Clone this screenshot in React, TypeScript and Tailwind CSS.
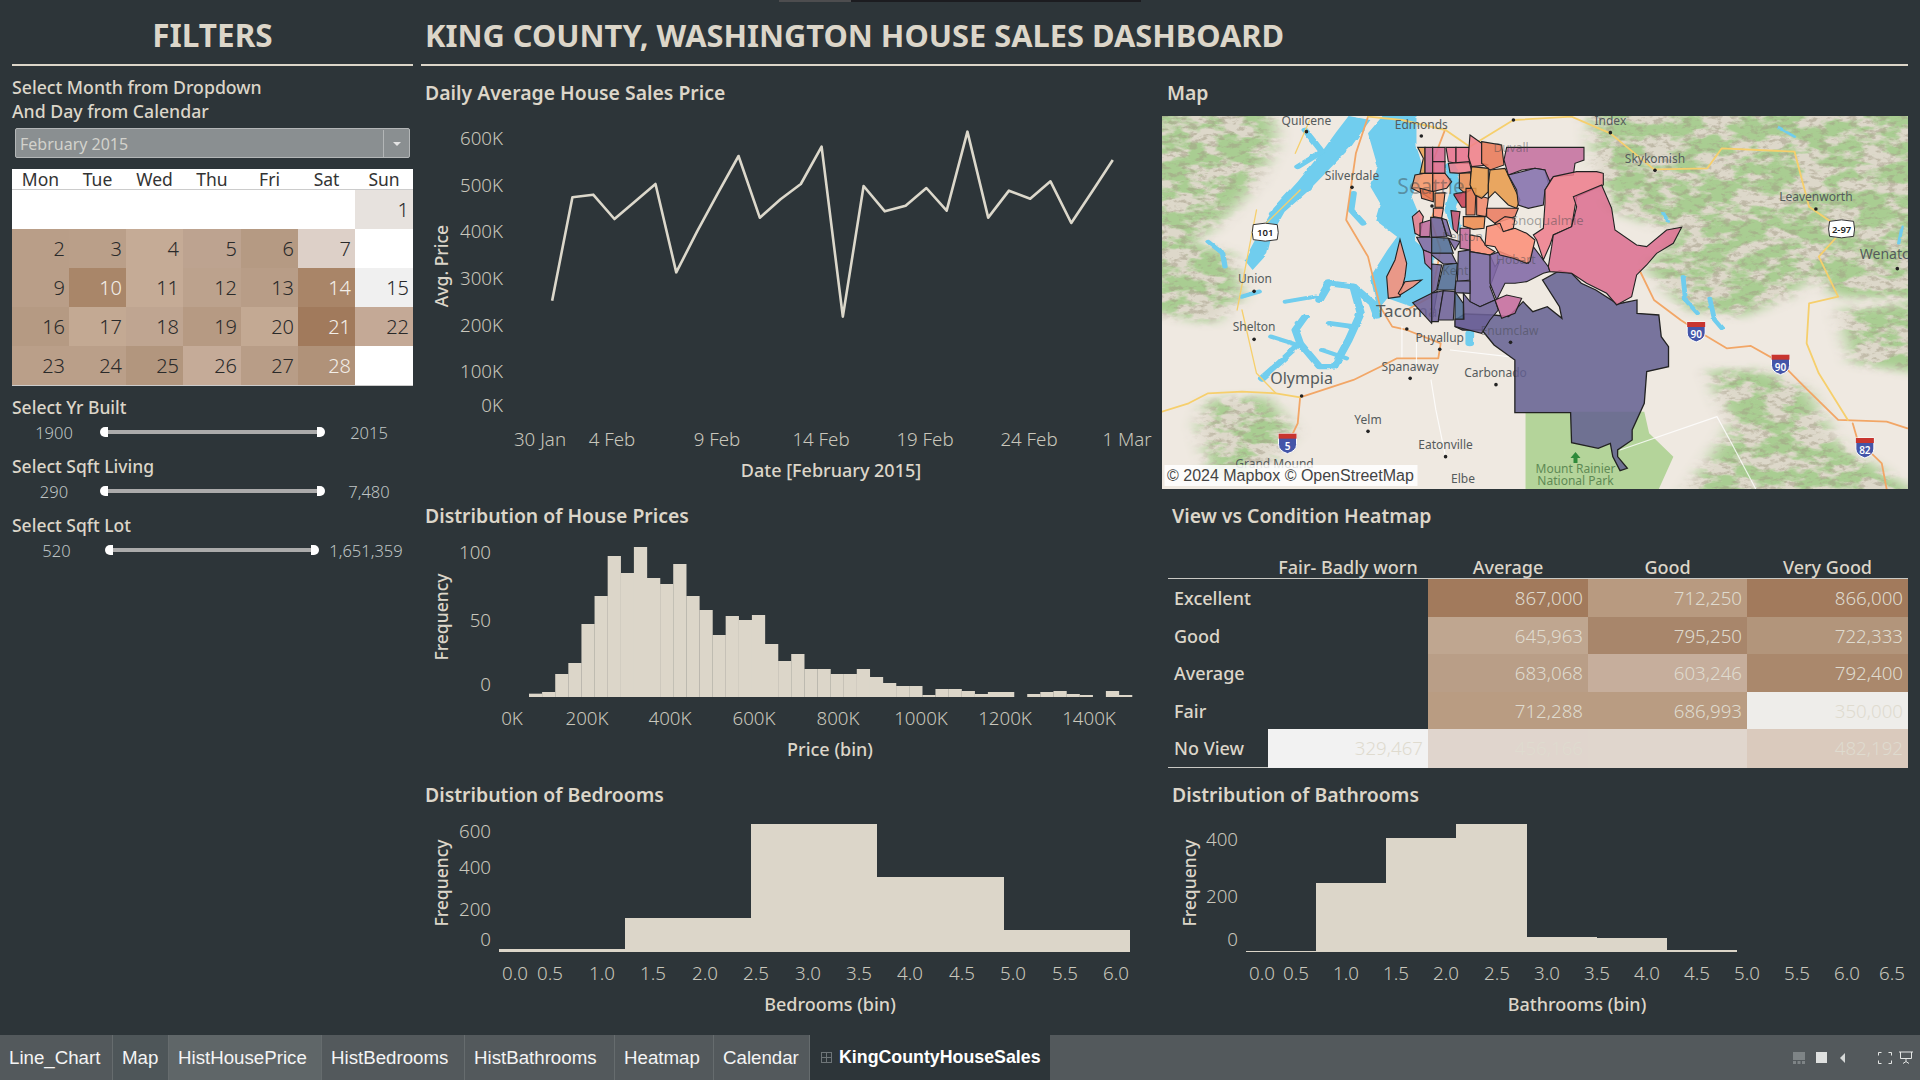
const lineText = "fill-[#c9c7bc] text-[18.7px] font-light";
const axisTitle = "fill-[#dcd6c9] text-[18px] font-medium";
const rotTitle = "fill-[#dcd6c9] text-[17.5px] font-medium";
const bar = "#dcd6c9";

const linePts = [
  [280, 572], [323, 262], [367, 254], [412, 327], [455, 275], [499, 222], [543, 487], [587, 365], [631, 250], [675, 138],
  [720, 323], [764, 268], [807, 222], [851, 110], [896, 620], [940, 228], [985, 304], [1029, 287], [1073, 234], [1116, 302],
  [1160, 65], [1204, 323], [1248, 242], [1293, 266], [1336, 214], [1380, 339], [1424, 245], [1468, 150],
];

const priceTops = [
  581, 576, 522, 489, 372, 288, 168, 219, 141, 234, 252, 192, 288, 330, 405, 348, 360, 345, 432, 483, 462, 507, 507,
  522, 522, 507, 531, 549, 558, 558, 585, 567, 567, 573, 582, 576, 576, 591, 582, 576, 573, 582, 585, 591, 573, 585,
];

const calendar: [string, string, boolean][][] = [
  [["", "#fff", false], ["", "#fff", false], ["", "#fff", false], ["", "#fff", false], ["", "#fff", false], ["", "#fff", false], ["1", "#e7e2de", false]],
  [["2", "#b99e88", false], ["3", "#ba9f89", false], ["4", "#c5ab96", false], ["5", "#bda390", false], ["6", "#b59a83", false], ["7", "#ddd0c8", false], ["", "#fff", false]],
  [["9", "#b99e88", false], ["10", "#a98669", true], ["11", "#c5ab96", false], ["12", "#bca28d", false], ["13", "#b89d87", false], ["14", "#a98568", true], ["15", "#f0f0f0", false]],
  [["16", "#b59a83", false], ["17", "#c3a993", false], ["18", "#bfa591", false], ["19", "#b69a83", false], ["20", "#c3a993", false], ["21", "#a17a5c", true], ["22", "#c4a996", false]],
  [["23", "#ba9f89", false], ["24", "#ba9f89", false], ["25", "#b2967e", false], ["26", "#c5ab98", false], ["27", "#b89d87", false], ["28", "#b09279", true], ["", "#fff", false]],
];

const heatRows: [string, (string | null)[], string[]][] = [
  ["Excellent", [null, "867,000", "712,250", "866,000"], ["transparent", "#a27a5c", "#b89a80", "#a27a5c"]],
  ["Good", [null, "645,963", "795,250", "722,333"], ["transparent", "#bfa690", "#a8866b", "#b2957b"]],
  ["Average", [null, "683,068", "603,246", "792,400"], ["transparent", "#b99e87", "#c6ae9c", "#aa886c"]],
  ["Fair", [null, "712,288", "686,993", "350,000"], ["transparent", "#b99c82", "#b99c82", "#eeedea"]],
  ["No View", ["329,467", "456,166", null, "482,192"], ["#f2f2f2", "#e0d5cd", "#e0d6cd", "#dacabd"]],
];

const tabs = [
  ["Line_Chart", "w-[113px] bg-[#53595c]"],
  ["Map", "w-[56px] bg-[#4e5659]"],
  ["HistHousePrice", "w-[153px] bg-[#5f6668]"],
  ["HistBedrooms", "w-[143px] bg-[#53595c]"],
  ["HistBathrooms", "w-[150px] bg-[#53595c]"],
  ["Heatmap", "w-[99px] bg-[#53595c]"],
  ["Calendar", "w-[96px] bg-[#53595c]"],
];

function Panel({ title, pad, gap, children }: { title: string; pad: string; gap?: string; children: React.ReactNode }) {
  return (
    <div className="flex flex-col">
      <h2 className={`h-[34px] text-[19.4px] leading-[34px] font-semibold text-[#dcd6c9] ${pad} ${gap ?? ""}`}>{title}</h2>
      {children}
    </div>
  );
}

function AxisLabels({ items, y }: { items: [string, number][]; y: number }) {
  return (
    <>
      {items.map(([t, x]) => (
        <text key={t + x} x={x} y={y - 1} textAnchor="middle" dominantBaseline="central" className={lineText}>{t}</text>
      ))}
    </>
  );
}

function YLabels({ items, x }: { items: [string, number][]; x: number }) {
  return (
    <>
      {items.map(([t, y]) => (
        <text key={t} x={x} y={y - 2} textAnchor="end" dominantBaseline="central" className={lineText}>{t}</text>
      ))}
    </>
  );
}

function RotLabel({ text, x, y }: { text: string; x: number; y: number }) {
  return (
    <text x={x} y={y} transform={`rotate(-90 ${x} ${y})`} textAnchor="middle" dominantBaseline="central" className={rotTitle}>{text}</text>
  );
}

function XTitle({ text, x, y }: { text: string; x: number; y: number }) {
  return <text x={x} y={y - 1} textAnchor="middle" dominantBaseline="central" className={axisTitle}>{text}</text>;
}

function LineChart() {
  const points = linePts.map(([x, y]) => `${420 + x / 2.119},${110 + y / 3}`).join(" ");
  return (
    <svg width="741" height="356" viewBox="421 110 741 356" className="block overflow-visible">
      <YLabels x={503} items={[["600K", 139], ["500K", 186], ["400K", 232], ["300K", 279], ["200K", 326], ["100K", 372], ["0K", 406]]} />
      <RotLabel text="Avg. Price" x={441} y={266} />
      <polyline points={points} fill="none" stroke="#dcd8cb" strokeWidth="2.6" strokeLinejoin="round" />
      <AxisLabels y={439} items={[["30 Jan", 540], ["4 Feb", 612], ["9 Feb", 717], ["14 Feb", 821], ["19 Feb", 925], ["24 Feb", 1029], ["1 Mar", 1127]]} />
      <XTitle text="Date [February 2015]" x={831} y={471} />
    </svg>
  );
}

function PriceHist() {
  const w = (1509 - 231) / 46 / 2.119;
  return (
    <svg width="741" height="245" viewBox="421 533 741 245" className="block overflow-visible">
      <YLabels x={491} items={[["100", 553], ["50", 621], ["0", 685]]} />
      <RotLabel text="Frequency" x={441} y={617} />
      {priceTops.map((t, i) => (
        <rect key={i} x={529 + i * w} y={500 + t / 3} width={w + 0.15} height={(591 - t) / 3} fill={bar} />
      ))}
      <AxisLabels y={718} items={[["0K", 512], ["200K", 587], ["400K", 670], ["600K", 754], ["800K", 838], ["1000K", 921], ["1200K", 1005], ["1400K", 1089]]} />
      <XTitle text="Price (bin)" x={830} y={750} />
    </svg>
  );
}

function BedroomsHist() {
  const edges = [499, 625, 751, 877, 1004, 1130];
  const tops = [949, 918, 824, 877, 930];
  return (
    <svg width="741" height="222" viewBox="421 812 741 222" className="block overflow-visible">
      <YLabels x={491} items={[["600", 832], ["400", 868], ["200", 910], ["0", 940]]} />
      <RotLabel text="Frequency" x={441} y={883} />
      {tops.map((t, i) => (
        <rect key={i} x={edges[i]} y={t} width={edges[i + 1] - edges[i]} height={952 - t} fill={bar} shapeRendering="crispEdges" />
      ))}
      <AxisLabels y={973} items={[["0.0", 515], ["0.5", 550], ["1.0", 602], ["1.5", 653], ["2.0", 705], ["2.5", 756], ["3.0", 808], ["3.5", 859], ["4.0", 910], ["4.5", 962], ["5.0", 1013], ["5.5", 1065], ["6.0", 1116]]} />
      <XTitle text="Bedrooms (bin)" x={830} y={1005} />
    </svg>
  );
}

function BathroomsHist() {
  const edges = [1246, 1316, 1386, 1456, 1527, 1597, 1667, 1737];
  const tops = [951, 883, 838, 824, 937, 938, 950];
  return (
    <svg width="746" height="222" viewBox="1162 812 746 222" className="block overflow-visible">
      <YLabels x={1238} items={[["400", 840], ["200", 897], ["0", 940]]} />
      <RotLabel text="Frequency" x={1189} y={883} />
      {tops.map((t, i) => (
        <rect key={i} x={edges[i]} y={t} width={edges[i + 1] - edges[i]} height={952 - t} fill={bar} shapeRendering="crispEdges" />
      ))}
      <AxisLabels y={973} items={[["0.0", 1262], ["0.5", 1296], ["1.0", 1346], ["1.5", 1396], ["2.0", 1446], ["2.5", 1497], ["3.0", 1547], ["3.5", 1597], ["4.0", 1647], ["4.5", 1697], ["5.0", 1747], ["5.5", 1797], ["6.0", 1847], ["6.5", 1892]]} />
      <XTitle text="Bathrooms (bin)" x={1577} y={1005} />
    </svg>
  );
}

// map labels, in crop coordinates
const mapLabels: [string, number, number, number][] = [
  ["Quilcene", 303, 30, 12], ["Edmonds", 540, 42, 12], ["Index", 930, 32, 12], ["Skykomish", 1022, 145, 12],
  ["Silverdale", 397, 196, 12], ["Leavenworth", 1354, 260, 12], ["Union", 197, 506, 12], ["Shelton", 195, 650, 12],
  ["Puyallup", 578, 682, 12], ["Spanaway", 517, 770, 12], ["Carbonado", 693, 788, 12], ["Yelm", 430, 928, 12],
  ["Eatonville", 590, 1002, 12], ["Grand Mound", 237, 1060, 12], ["Elbe", 626, 1106, 12], ["Olympia", 293, 805, 16],
  ["Tacoma", 510, 600, 17], ["Wenatc", 1495, 430, 14],
];

const overlayLabels: [string, number, number, number][] = [
  ["Seattle", 560, 228, 21], ["Duvall", 725, 112, 12], ["Snoqualmie", 800, 330, 13], ["Renton", 625, 380, 12],
  ["Hobart", 735, 447, 12], ["Kent", 610, 480, 12], ["Enumclaw", 722, 660, 12],
];

const mapDots = [
  [303, 65], [540, 78], [730, 30], [930, 68], [1022, 181], [397, 232], [1354, 297], [1522, 476], [195, 544], [195, 688],
  [510, 657], [578, 718], [517, 805], [694, 824], [293, 858], [430, 964], [590, 1040], [562, 288], [724, 697],
];

const regions: [string, string][] = [
  ["113,82 135,82 135,160 120,160 130,115", "#e9a050"],
  ["135,82 158,82 158,160 135,160", "#c2688f"],
  ["158,82 195,82 195,125 158,125", "#d96b94"],
  ["158,125 195,125 195,160 158,160", "#dc6b8d"],
  ["158,160 195,160 215,185 200,205 158,215", "#f58a72"],
  ["198,82 228,82 228,130 205,125", "#e8728f"],
  ["228,82 268,82 268,130 228,130", "#e8728f"],
  ["205,130 268,125 275,155 240,160 210,158", "#ee7f8e"],
  ["135,160 158,160 158,240 135,225 95,205 105,165", "#f6976a"],
  ["238,160 272,158 272,210 255,220 238,205", "#e98c55"],
  ["222,222 258,215 258,262 245,262 222,225", "#c93f55"],
  ["258,205 288,205 285,285 258,285", "#e5764f"],
  ["290,225 325,235 318,290 290,285", "#f08a6c"],
  ["250,290 315,290 312,325 280,328 250,318", "#ee8c4f"],
  ["320,265 415,265 405,290 345,310 320,290", "#ea7c60"],
  ["345,310 375,290 405,295 400,325 370,335", "#fb9079"],
  ["165,220 195,218 190,262 165,262", "#ef8f60"],
  ["120,205 160,215 160,245 125,235", "#e8764f"],
  ["160,265 190,265 185,295 160,290", "#fb9079"],
  ["213,272 240,275 232,340 220,328", "#d0556f"],
  ["97,290 118,272 130,290 120,348 105,340", "#f0808a"],
  ["120,310 152,300 150,350 120,350", "#bf6b9c"],
  ["152,292 185,295 200,350 155,352", "#6d6299"],
  ["185,295 200,300 215,350 200,345", "#7a68a3"],
  ["110,352 155,352 155,400 130,390", "#7a68a3"],
  ["155,352 205,355 220,400 155,400", "#4f6d96"],
  ["205,355 240,365 225,390", "#7a68a3"],
  ["240,325 270,325 270,390 240,385", "#c66c9f"],
  ["270,345 300,350 320,380 345,395 330,405 270,395", "#fb9079"],
  ["130,390 155,400 155,450 135,430", "#bf6b9c"],
  ["155,400 215,400 230,430 190,432 155,405", "#7068a0"],
  ["190,435 232,430 225,510 172,510", "#4f6d96"],
  ["155,432 185,435 170,510 155,520", "#6d6299"],
  ["235,395 270,390 270,480 232,485", "#7068a0"],
  ["270,395 330,405 345,440 360,420 330,500 345,540 300,560 270,545", "#7a68a3"],
  ["330,405 360,395 445,430 460,380 505,440 510,455 490,460 440,485 405,490 375,490 350,540 330,490", "#8168a6"],
  ["228,483 270,483 270,520 225,518", "#7068a0"],
  ["98,548 155,520 172,515 155,610", "#6d6299"],
  ["155,520 190,512 175,605 155,605", "#6d6299"],
  ["190,512 225,515 220,600 175,600", "#6d6299"],
  ["225,515 250,550 250,598 225,598", "#4f6d96"],
  ["250,520 270,545 300,560 345,540 355,570 330,600 305,640 225,620 225,598 252,598", "#6d6299"],
  ["345,540 380,525 425,535 405,580 365,595", "#c66c9f"],
  ["60,358 80,430 75,470 60,530 25,535 20,470 45,420", "#fb9079"],
  ["55,520 75,485 125,480 100,500 60,525", "#fb9079"],
  ["270,45 305,70 305,130 325,135 275,140 265,110", "#f0808a"],
  ["305,65 365,75 372,135 330,150 305,130", "#e97a58"],
  ["275,140 325,145 325,215 305,235 285,225 270,195", "#e89c4d"],
  ["330,150 375,145 420,240 410,265 385,255 345,215 325,235 325,195", "#e89c4d"],
  ["380,82 612,82 612,120 585,130 580,165 520,170 505,190 495,150 465,145 425,150 385,165 372,120", "#c470a0"],
  ["385,165 425,155 465,145 495,150 510,185 495,210 490,255 445,265 415,255 410,210", "#8470ad"],
  ["520,170 590,155 650,155 670,160 670,195 590,230 575,320 520,345 510,375 490,420 470,360 460,345 490,325 495,250 495,210", "#ee7f8e"],
  ["580,230 665,195 695,265 705,330 770,375 800,380 860,330 905,322 880,370 830,400 800,435 770,465 755,530 710,555 680,520 620,490 575,460 510,455 505,440 515,380 520,345 575,320 590,260", "#dc7092"],
  ["320,320 360,310 370,335 405,325 440,340 465,360 450,425 440,430 400,415 360,405 345,380 315,375", "#fb9079"],
];

function Shield({ x, y, label }: { x: number; y: number; label: string }) {
  const cx = (x - 5) / 2.063;
  const cy = (y - 18) / 3;
  return (
    <g transform={`translate(${cx} ${cy})`}>
      <path d="M-9 -8 L9 -8 L9 3 Q9 9 0 12 Q-9 9 -9 3 Z" fill="#4455a8" stroke="#fff" strokeWidth="1" />
      <path d="M-9 -8 L9 -8 L9 -3 L-9 -3 Z" fill="#c8352f" />
      <text x="0" y="4" textAnchor="middle" dominantBaseline="central" className="fill-white text-[10px] font-semibold">{label}</text>
    </g>
  );
}

function WhiteShield({ x, y, label }: { x: number; y: number; label: string }) {
  const cx = (x - 5) / 2.063;
  const cy = (y - 18) / 3;
  return (
    <g transform={`translate(${cx} ${cy})`}>
      <path d="M-12 -8 Q0 -11 12 -8 Q14 0 12 7 Q0 10 -12 7 Q-14 0 -12 -8 Z" fill="#fff" stroke="#333" strokeWidth="1" />
      <text x="0" y="0" textAnchor="middle" dominantBaseline="central" className="fill-[#222] text-[9.5px] font-semibold">{label}</text>
    </g>
  );
}

function MapArt() {
  const crop = "translate(-2.42 -6) scale(0.4847 0.3333)";
  return (
    <svg width="746" height="373" viewBox="0 0 746 373" className="block bg-[#efe9e1]">
      <defs>
        <filter id="rough" x="-10%" y="-10%" width="120%" height="120%">
          <feTurbulence type="fractalNoise" baseFrequency="0.03" numOctaves="4" seed="4" />
          <feDisplacementMap in="SourceGraphic" scale="7" />
        </filter>
        <filter id="soft" x="-10%" y="-10%" width="120%" height="120%">
          <feGaussianBlur stdDeviation="18 12" />
        </filter>
        <filter id="mottle" x="0" y="0" width="100%" height="100%">
          <feTurbulence type="fractalNoise" baseFrequency="0.05 0.07" numOctaves="5" seed="9" result="n" />
          <feColorMatrix in="n" type="matrix" values="0 0 0 0 0 0 0 0 0 0 0 0 0 0 0 5 0 0 0 -2.5" result="a" />
          <feComposite in="SourceGraphic" in2="a" operator="in" />
        </filter>
        <filter id="mottle2" x="0" y="0" width="100%" height="100%">
          <feTurbulence type="fractalNoise" baseFrequency="0.016 0.024" numOctaves="4" seed="21" result="n" />
          <feColorMatrix in="n" type="matrix" values="0 0 0 0 0 0 0 0 0 0 0 0 0 0 0 6 0 0 0 -2.4" result="a" />
          <feComposite in="SourceGraphic" in2="a" operator="in" />
        </filter>
        <mask id="hills" maskUnits="userSpaceOnUse" x="0" y="0" width="1568" height="1140">
          <path
            filter="url(#soft)"
            fill="#fff"
            d="M880 -40 L1620 -40 L1620 570 L1400 560 L1340 500 L1300 560 L1200 620 L1090 600 L1000 470 L1070 370 L930 300 L900 170 Z M-60 -40 L230 -40 L240 100 L200 220 L130 330 L70 400 L150 430 L170 560 L110 640 L-60 600 Z M1130 780 L1240 780 L1330 830 L1400 1000 L1620 1200 L1060 1200 L1180 950 Z M1400 600 L1620 570 L1620 800 L1430 760 Z M100 870 L220 860 L280 960 L200 1100 L110 1100 L80 950 Z"
          />
        </mask>
      </defs>
      <g transform={crop}>
        <g mask="url(#hills)">
          <rect x="0" y="0" width="1568" height="1140" fill="#ddd8ca" />
          <rect x="0" y="0" width="1568" height="1140" fill="#a9cd92" filter="url(#mottle2)" />
          <rect x="0" y="0" width="1568" height="1140" fill="#a39c86" filter="url(#mottle)" opacity="0.5" />
        </g>
        <path d="M755 905 L1000 905 L1010 970 L1060 1040 L1030 1137 L755 1137 Z" fill="#b4d49a" />
        <g filter="url(#rough)" fill="#6fcdee" stroke="none">
          <path d="M460 18 L530 18 L530 110 L545 180 L520 260 L540 330 L525 390 L565 440 L565 545 L520 590 L470 565 L450 600 L435 500 L470 420 L490 380 L445 330 L455 280 L435 230 L450 170 L440 120 L430 70 Z" />
          <path d="M390 18 L435 30 L415 70 L395 110 L345 185 L305 245 L258 305 L232 372 L222 432 L192 480 L175 450 L195 395 L235 295 L285 215 L335 125 L365 65 Z" />
        </g>
        <g fill="none" stroke="#6fcdee" strokeLinecap="round" strokeLinejoin="round" filter="url(#rough)">
          <path d="M450 620 L440 580 L400 530 L350 520 L330 570" strokeWidth="18" />
          <path d="M400 530 L415 610 L390 690 L360 770" strokeWidth="17" />
          <path d="M350 640 L400 650" strokeWidth="14" />
          <path d="M360 770 L330 770 L290 700 L280 660 L300 620" strokeWidth="16" />
          <path d="M210 805 L245 760 L290 700" strokeWidth="14" />
          <path d="M320 560 L260 575 M335 720 L385 745 M205 545 L170 560 M230 680 L285 705" strokeWidth="12" />
          <path d="M300 60 L335 125 L285 170" strokeWidth="14" />
          <path d="M100 395 L130 430 L135 470" strokeWidth="11" />
          <path d="M400 250 L395 300 L420 340" strokeWidth="14" />
          <path d="M600 170 L612 240 L600 300 L612 350" strokeWidth="24" />
          <path d="M1080 500 L1085 570 L1110 610" strokeWidth="10" />
          <path d="M1135 565 L1145 630 L1160 655" strokeWidth="10" />
          <path d="M640 670 L640 700" strokeWidth="18" />
          <path d="M1280 55 L1310 80 M1040 310 L1050 335 M1532 350 L1525 400" strokeWidth="7" />
        </g>
        <g fill="none" strokeLinejoin="round" strokeLinecap="round">
          <path d="M430 20 L405 130 L385 330 L430 440 L455 590 L480 650 L510 660 L580 700 L575 745 L490 745 L470 760 L400 810 L290 862 L285 940 L265 1000" stroke="#f2a666" strokeWidth="1.8" vectorEffect="non-scaling-stroke" />
          <path d="M5 905 L60 880 L100 850 L170 845 L240 850 L290 862" stroke="#f6cf6c" strokeWidth="1.8" vectorEffect="non-scaling-stroke" />
          <path d="M990 480 L1020 570 L1075 630 L1107 660 L1170 715 L1220 708 L1281 758 L1330 830 L1400 930 L1500 935 L1543 955" stroke="#f2a666" strokeWidth="1.8" vectorEffect="non-scaling-stroke" />
          <path d="M730 30 L850 20 L930 70 L1020 178 L1130 175 L1160 115 L1310 125 L1340 290 L1410 360 L1360 440 L1400 560 L1340 580 L1335 700 L1360 790 L1420 930" stroke="#f6cf6c" strokeWidth="1.8" vectorEffect="non-scaling-stroke" />
          <path d="M1430 940 L1440 990 L1490 1060 L1500 1137" stroke="#f2a666" strokeWidth="1.8" vectorEffect="non-scaling-stroke" />
          <path d="M590 55 L565 150 L570 290 L560 330 L580 420 L560 560 L510 600" stroke="#f2a666" strokeWidth="1.8" vectorEffect="non-scaling-stroke" />
          <path d="M430 20 L500 30 L590 60 L640 110 L730 30" stroke="#f6cf6c" strokeWidth="1.8" vectorEffect="non-scaling-stroke" />
          <path d="M280 130 L310 30 M220 340 L290 240 M170 600 L200 790 L240 850 M200 300 L160 600" stroke="#f6cf6c" strokeWidth="1.3" vectorEffect="non-scaling-stroke" />
          <path d="M950 1020 L1150 920 L1180 1000 L1230 1137 M500 650 L500 740 M530 690 L530 760 M560 810 L570 900 L590 1040 M600 720 L720 740" stroke="#fff" strokeOpacity="0.8" strokeWidth="1.2" vectorEffect="non-scaling-stroke" />
        </g>
      </g>
      {mapLabels.map(([t, x, y, s]) => (
        <text key={t} x={(x - 5) / 2.063} y={(y - 18) / 3} textAnchor="middle" dominantBaseline="central" fill="#555b5c" fontSize={s}>{t}</text>
      ))}
      <g transform={crop}>
        <path
          d="M790 510 L825 482 L850 490 L870 520 L900 540 L945 582 L985 570 L985 610 L1030 615 L1035 680 L1050 710 L1050 770 L1005 785 L1000 880 L975 960 L975 990 L945 1020 L945 1040 L965 1075 L950 1082 L935 1040 L930 1000 L905 1015 L850 998 L848 908 L780 908 L733 908 L733 750 L690 705 L665 660 L625 660 L610 650 L610 630 L630 612 L690 615 L720 620 L750 575 L770 605 L800 590 L830 625 L825 590 Z"
          fill="#635f90"
          fillOpacity="0.85"
          stroke="#222"
          strokeWidth="1.3"
          vectorEffect="non-scaling-stroke"
        />
      </g>
      <g transform="translate(218 4) scale(0.3333)">
        {regions.map(([p, c], i) => (
          <polygon key={i} points={p} fill={c} fillOpacity="0.87" stroke="#222" strokeWidth="1.1" vectorEffect="non-scaling-stroke" />
        ))}
      </g>
      {overlayLabels.map(([t, x, y, s]) => (
        <text key={t} x={(x - 5) / 2.063} y={(y - 18) / 3} textAnchor="middle" dominantBaseline="central" fill="#3d4346" fillOpacity="0.45" fontSize={s}>{t}</text>
      ))}
      {mapDots.map(([x, y]) => (
        <circle key={`${x}-${y}`} cx={(x - 5) / 2.063} cy={(y - 18) / 3} r="1.8" fill="#222" />
      ))}
      <Shield x={1107} y={660} label="90" />
      <Shield x={1281} y={758} label="90" />
      <Shield x={264} y={995} label="5" />
      <Shield x={1455} y={1008} label="82" />
      <WhiteShield x={218} y={368} label="101" />
      <WhiteShield x={1407} y={358} label="2-97" />
      <path d="M413.5 336 l-5 6 h3 v5 h4 v-5 h3 Z" fill="#2f8a3a" />
      <text x={413.5} y={352.5} textAnchor="middle" dominantBaseline="central" fill="#5f8a55" fontSize="12">Mount Rainier</text>
      <text x={413.5} y={364.5} textAnchor="middle" dominantBaseline="central" fill="#5f8a55" fontSize="12">National Park</text>
      <rect x="2.5" y="349" width="253" height="21" fill="#fff" fillOpacity="0.85" />
      <text x="5" y="359.5" dominantBaseline="central" fill="#444" fontSize="16" fontFamily="'Liberation Sans', sans-serif">© 2024 Mapbox © OpenStreetMap</text>
    </svg>
  );
}

function Heatmap() {
  return (
    <div className="ml-[6px] w-[740px]">
      <div className="grid h-[46px] grid-cols-[100px_160px_160px_159px_161px] items-end border-b border-[#c9c9c4] text-[18px] font-medium text-[#dcd6c9]">
        <span />
        <span className="text-center leading-[22px]">Fair- Badly worn</span>
        <span className="text-center leading-[22px]">Average</span>
        <span className="text-center leading-[22px]">Good</span>
        <span className="text-center leading-[22px]">Very Good</span>
      </div>
      <div className="border-b border-[#c9c9c4]">
        {heatRows.map(([label, vals, colors]) => (
          <div key={label} className="grid h-[37.6px] grid-cols-[100px_160px_160px_159px_161px]">
            <span className="pl-[6px] text-[18px] leading-[39px] font-medium text-[#dcd6c9]">{label}</span>
            {vals.map((v, i) => (
              <span key={i} className="pr-[5px] text-right text-[18.7px] leading-[38px] font-light text-[#dfdbcf]" style={{ backgroundColor: colors[i] }}>
                {v}
              </span>
            ))}
          </div>
        ))}
      </div>
    </div>
  );
}

function Slider({ label, min, max, lot }: { label: string; min: string; max: string; lot?: boolean }) {
  return (
    <div className="mb-[10px]">
      <div className="h-[24px] text-[17.5px] leading-[24px] font-medium text-[#dcd6c9]">{label}</div>
      <div className="flex h-[25px] items-center text-[16.5px] font-light text-[#bfc4c4]">
        <span className={`pt-[3px] pr-1 text-center ${lot ? "w-[93px]" : "w-[88px]"}`}>{min}</span>
        <span className="h-[10px] w-[8px] rounded-l-full bg-white" />
        <span className={`h-[4px] bg-[#ababab] ${lot ? "w-[198px]" : "w-[209px]"}`} />
        <span className="h-[10px] w-[8px] rounded-r-full bg-white" />
        <span className="flex-1 pt-[3px] text-center">{max}</span>
      </div>
    </div>
  );
}

function Sidebar() {
  return (
    <aside className="ml-3 w-[401px]">
      <h1 className="h-[64px] border-b-2 border-[#dcd6c9] pt-[6px] text-center text-[31.5px] leading-[54px] font-bold text-[#dcd6c9]">FILTERS</h1>
      <p className="mt-[9px] text-[17.7px] leading-[24px] font-medium text-[#dcd6c9]">
        Select Month from Dropdown
        <br />
        And Day from Calendar
      </p>
      <div className="mx-[3px] mt-[5px] flex h-[30px] items-center rounded-[2px] border border-[#b3b6b7] bg-[#8a8f91] pt-[1px] text-[16px] text-[#d2d2cc]">
        <span className="flex-1 pl-[4px]">February 2015</span>
        <span className="flex h-full w-[26px] items-center justify-center border-l border-[#b3b6b7]">
          <span className="h-0 w-0 border-x-[4px] border-t-[4px] border-x-transparent border-t-[#e4e4e4]" />
        </span>
      </div>
      <div className="mt-[11px] border-b border-[#cccccc] bg-white">
        <div className="grid h-[21px] grid-cols-[57px_57px_57px_58px_57px_57px_58px] border-b border-[#cccccc] text-center text-[17.5px] leading-[20px] text-[#333]">
          {["Mon", "Tue", "Wed", "Thu", "Fri", "Sat", "Sun"].map((d) => (
            <span key={d}>{d}</span>
          ))}
        </div>
        {calendar.map((row, r) => (
          <div key={r} className="grid h-[39px] grid-cols-[57px_57px_57px_58px_57px_57px_58px]">
            {row.map(([n, c, light], i) => (
              <span
                key={i}
                className={`pr-[4px] text-right text-[20px] leading-[39px] font-light ${light ? "text-[#f3efe9]" : "text-[#2a2a2a]"}`}
                style={{ backgroundColor: c }}
              >
                {n}
              </span>
            ))}
          </div>
        ))}
      </div>
      <div className="mt-[9px]">
        <Slider label="Select Yr Built" min="1900" max="2015" />
        <Slider label="Select Sqft Living" min="290" max="7,480" />
        <Slider label="Select Sqft Lot" min="520" max="1,651,359" lot />
      </div>
    </aside>
  );
}

function TabBar() {
  return (
    <footer className="flex h-[45px] items-stretch bg-[#53595c] font-['Liberation_Sans',sans-serif] text-white">
      {tabs.map(([t, cls]) => (
        <div key={t} className={`${cls} border-r border-[#666c6e] pl-[9px] text-[18.7px] leading-[45px] text-[#f4f4f4]`}>{t}</div>
      ))}
      <div className="flex w-[240px] items-center bg-[#2d3539] pl-[10px] text-[17.8px] font-bold">
        <svg width="13" height="13" viewBox="0 0 13 13" fill="none" stroke="#6e7578" className="mr-[6px]">
          <rect x="1.5" y="1.5" width="10" height="10" />
          <path d="M6.5 1.5v10M1.5 6.5h10" />
        </svg>
        KingCountyHouseSales
      </div>
      <div className="ml-auto flex items-center gap-[11px] pr-[7px]">
        <svg width="12" height="12" viewBox="0 0 12 12" fill="#7e8486">
          <rect x="0" y="0" width="12" height="8" />
          <rect x="0" y="9" width="3" height="3" />
          <rect x="4.5" y="9" width="3" height="3" />
          <rect x="9" y="9" width="3" height="3" />
        </svg>
        <span className="h-[11px] w-[11px] bg-[#dfe1e0]" />
        <svg width="6" height="10" viewBox="0 0 6 10" fill="#d5d8d7" className="ml-[2px]">
          <path d="M5 0v10L0 5z" />
        </svg>
        <svg width="14" height="12" viewBox="0 0 14 12" fill="none" stroke="#e4e6e5" strokeWidth="1" className="ml-[21px]">
          <path d="M.5 3.5v-3h3M10.5.5h3v3M13.5 8.5v3h-3M3.5 11.5h-3v-3" />
        </svg>
        <svg width="14" height="13" viewBox="0 0 14 13" fill="none" stroke="#e4e6e5" strokeWidth="1" className="-ml-[4px]">
          <path d="M0 1h14M1.5 1v6.5h11V1M7 7.5v3M4 12.5l3-2 3 2" />
        </svg>
      </div>
    </footer>
  );
}

export default function App() {
  return (
    <div className="flex h-[1080px] w-[1920px] flex-col overflow-hidden bg-[#2d3539] font-['Noto_Sans',sans-serif]">
      <div className="flex h-[2px] pl-[779px]">
        <span className="w-[72px] bg-[#4d4d4f]" />
        <span className="w-[290px] bg-[#1c1c20]" />
      </div>
      <div className="flex flex-1">
        <Sidebar />
        <main className="ml-2 w-[1487px]">
          <h1 className="h-[64px] border-b-2 border-[#dcd6c9] pt-[6px] pl-[4px] text-[30.8px] leading-[54px] font-bold text-[#dcd6c9]">
            KING COUNTY, WASHINGTON HOUSE SALES DASHBOARD
          </h1>
          <div className="mt-[10px] grid grid-cols-[741px_746px]">
            <Panel title="Daily Average House Sales Price" pad="pl-[4px]">
              <div className="h-[389px]">
                <LineChart />
              </div>
            </Panel>
            <Panel title="Map" pad="pl-[5px]" gap="mb-[6px]">
              <div className="h-[383px]">
                <MapArt />
              </div>
            </Panel>
            <Panel title="Distribution of House Prices" pad="pl-[4px]">
              <PriceHist />
            </Panel>
            <Panel title="View vs Condition Heatmap" pad="pl-[10px]">
              <Heatmap />
            </Panel>
            <Panel title="Distribution of Bedrooms" pad="pl-[4px]">
              <BedroomsHist />
            </Panel>
            <Panel title="Distribution of Bathrooms" pad="pl-[10px]">
              <BathroomsHist />
            </Panel>
          </div>
        </main>
      </div>
      <TabBar />
    </div>
  );
}
